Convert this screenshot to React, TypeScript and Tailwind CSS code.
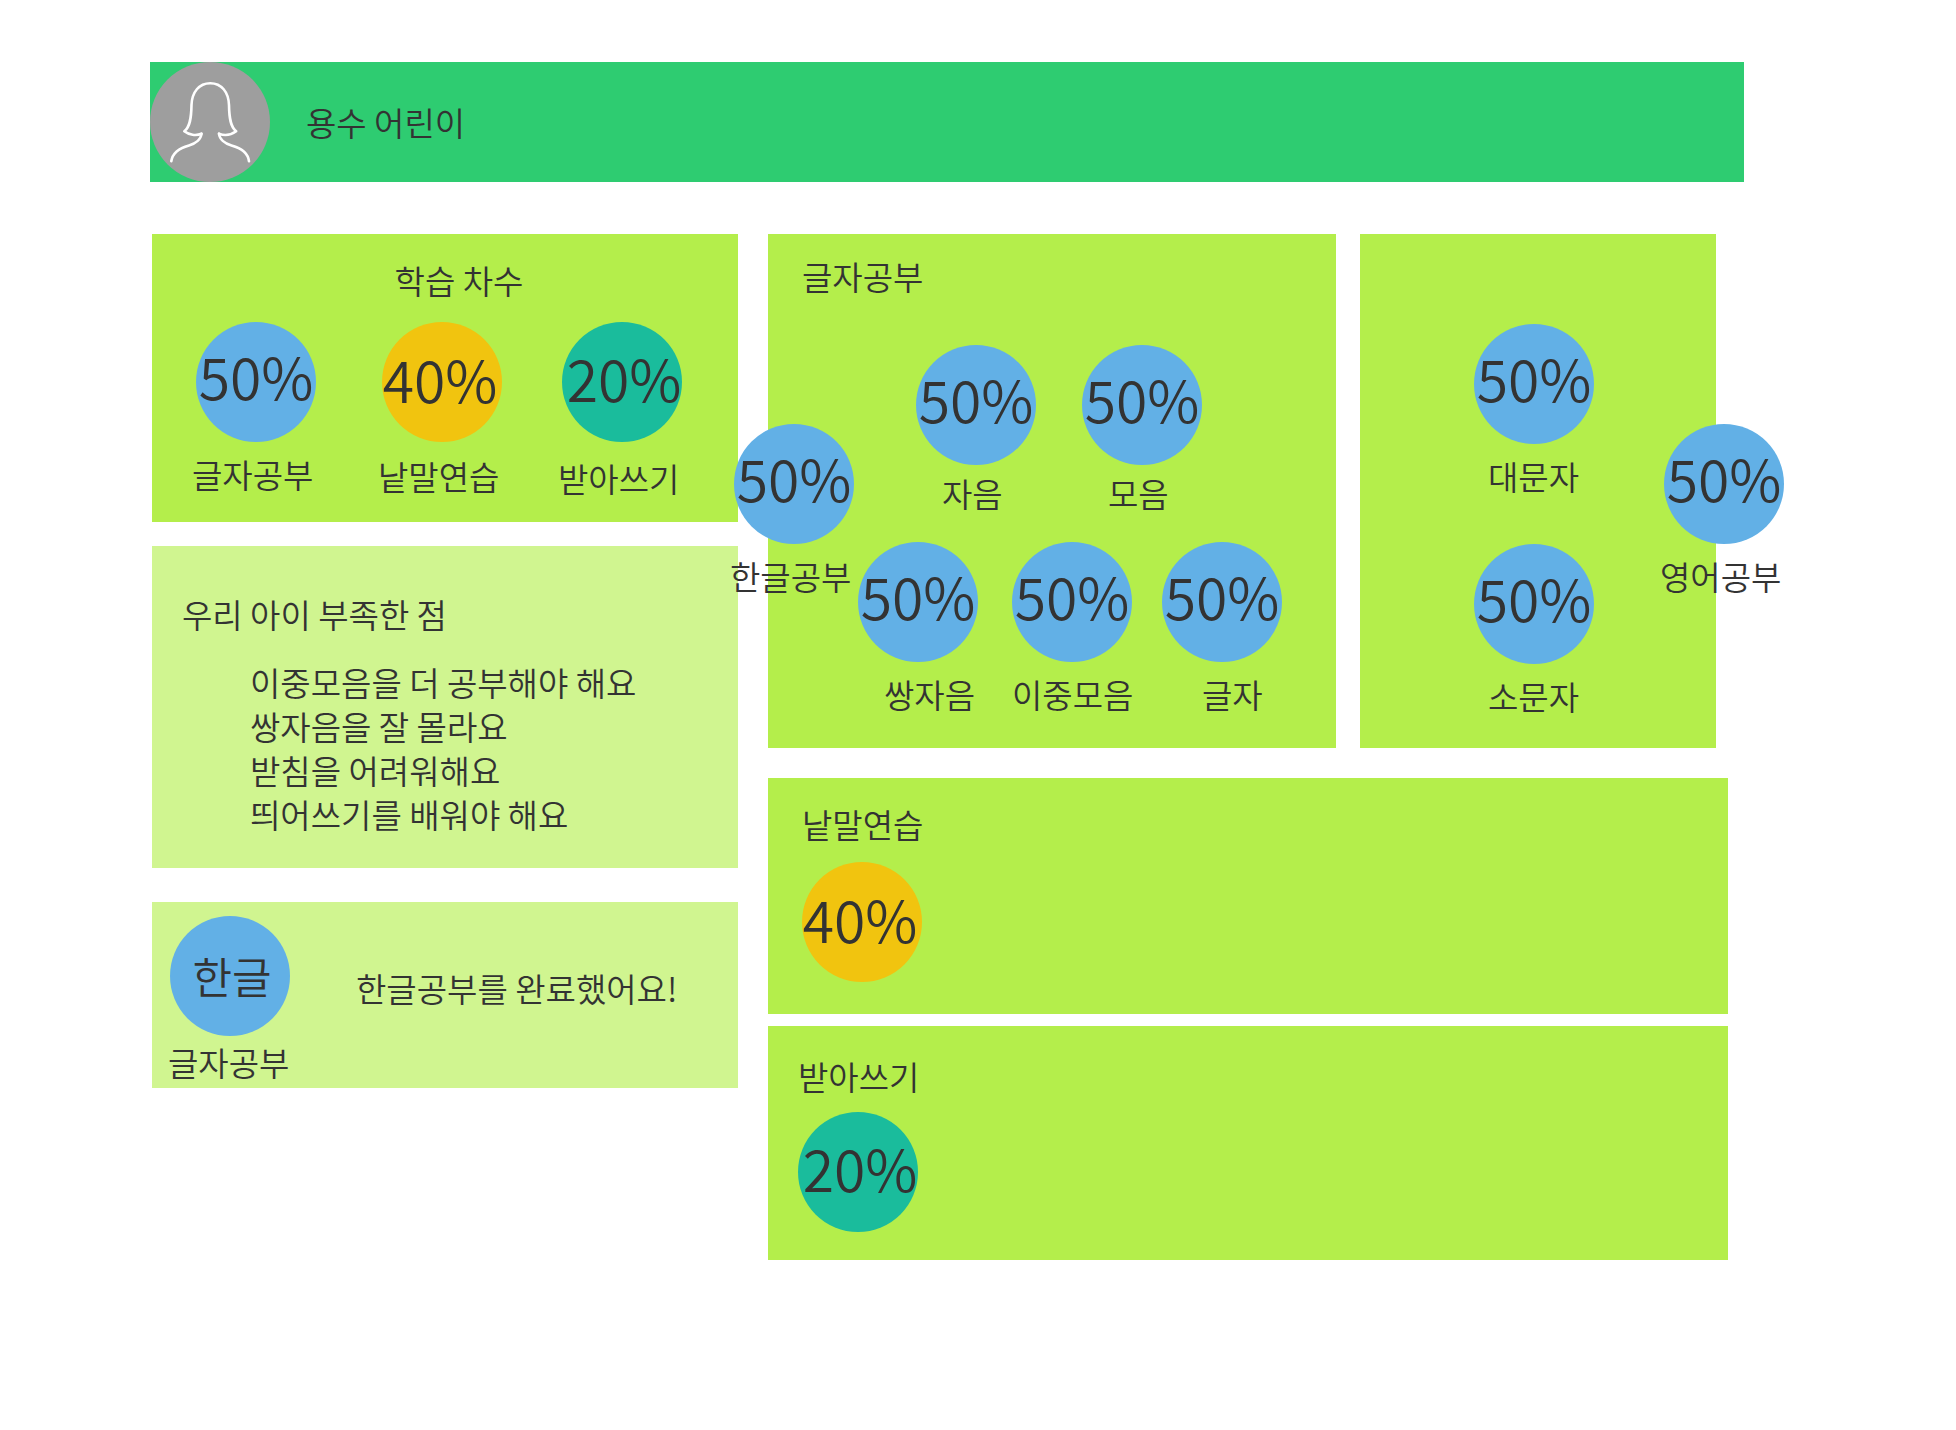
type Tone = 'blue' | 'amber' | 'teal';

// Each tone carries the resting place of its figure inside the disc.
const toneStyles: Record<Tone, string> = {
  blue: 'bg-[#62b0e6] pb-3.5',
  amber: 'bg-[#f1c40f] pr-1 pb-2',
  teal: 'bg-[#1abc9c] pl-1 pb-2.5',
};

function Disc({ tone, value }: { tone: Tone; value: string }) {
  return (
    <div
      className={`flex size-[120px] shrink-0 items-center justify-center rounded-full text-[57px] leading-none whitespace-nowrap ${toneStyles[tone]}`}
    >
      {value}
    </div>
  );
}

function Score({
  tone = 'blue',
  value = '50%',
  label,
  labelClass = '-ml-1 mt-2.5',
}: {
  tone?: Tone;
  value?: string;
  label: string;
  labelClass?: string;
}) {
  return (
    <figure className="w-[120px]">
      <Disc tone={tone} value={value} />
      <figcaption className={`whitespace-nowrap ${labelClass}`}>{label}</figcaption>
    </figure>
  );
}

function Avatar() {
  return (
    <svg viewBox="0 0 120 120" className="size-[120px] shrink-0" role="img" aria-label="프로필">
      <circle cx="60" cy="60" r="60" fill="#9e9e9e" />
      <g fill="none" stroke="#fff" strokeWidth="2.6" strokeLinecap="round" strokeLinejoin="round">
        <path d="M51.500 71.700C51 77 46 81.500 39 83.500C30 86 22.500 90.500 21.300 99.300" />
        <path d="M51.500 71.700C46 74 39 73 34.300 69.300C40 65 41.300 56 41.500 43C42 30 49 21.200 60.300 21.200C71.500 21.200 78.500 30 79 43C79.200 56 80.500 65 86.200 69.300C81 73 75 74 69 71.700" />
        <path d="M69 71.700C69.500 77 74.500 81.500 81.500 83.500C90.500 86 98 90.500 99 99.300" />
      </g>
    </svg>
  );
}

const weakPoints = [
  '이중모음을 더 공부해야 해요',
  '쌍자음을 잘 몰라요',
  '받침을 어려워해요',
  '띄어쓰기를 배워야 해요',
];

export default function App() {
  return (
    <div className="min-h-screen bg-white pt-[62px] pb-[170px] font-['Noto_Sans_CJK_KR_DemiLight','Noto_Sans_CJK_KR',sans-serif] text-[33px] leading-[44px] text-[#333333]">
      <header className="mr-[212px] ml-[150px] flex items-center gap-9 bg-[#2ecc71]">
        <Avatar />
        <h1>용수 어린이</h1>
      </header>

      <main className="mt-[52px] mr-[228px] ml-[152px] grid grid-cols-[586fr_960fr] items-start gap-[30px]">
        <div className="flex flex-col">
          <section className="bg-[#b4ee4b] pt-6 pb-[22px]">
            <h2 className="pl-7 text-center">학습 차수</h2>
            <div className="mt-5 grid grid-cols-[186fr_180fr_120fr] pr-14 pl-11">
              <Score label="글자공부" />
              <Score tone="amber" value="40%" label="낱말연습" labelClass="-ml-1 mt-3" />
              <Score tone="teal" value="20%" label="받아쓰기" labelClass="-ml-1 mt-3.5" />
            </div>
          </section>

          <section className="mt-6 bg-[#d0f590] pt-[46px] pb-8 pl-[30px]">
            <h2>우리 아이 부족한 점</h2>
            <ul className="mt-6 pl-[68px]">
              {weakPoints.map((point) => (
                <li key={point}>{point}</li>
              ))}
            </ul>
          </section>

          <section className="mt-[34px] flex items-start gap-[66px] bg-[#d0f590] pt-3.5 pb-1 pl-[18px]">
            <figure className="w-[120px]">
              <div className="flex size-[120px] items-center justify-center rounded-full bg-[#62b0e6] pb-0.5 pl-1 text-[43px]">
                한글
              </div>
              <figcaption className="-ml-0.5 mt-1 whitespace-nowrap">글자공부</figcaption>
            </figure>
            <p className="pt-[50px]">한글공부를 완료했어요!</p>
          </section>
        </div>

        <div className="flex flex-col">
          <div className="grid grid-cols-[568fr_356fr] gap-6 pr-3">
            <section className="relative bg-[#b4ee4b] pt-5 pb-8">
              <h2 className="pl-[34px]">글자공부</h2>
              <div className="mt-[47px] grid grid-cols-[166fr_120fr] pr-[134px] pl-[148px]">
                <Score label="자음" labelClass="ml-[26px] mt-1.5" />
                <Score label="모음" labelClass="ml-[26px] mt-1.5" />
              </div>
              <div className="mt-[27px] grid grid-cols-[154fr_150fr_120fr] pr-[54px] pl-[90px]">
                <Score label="쌍자음" labelClass="ml-[26px] mt-2.5" />
                <Score label="이중모음" labelClass="mt-2.5" />
                <Score label="글자" labelClass="ml-10 mt-2.5" />
              </div>
              <div className="absolute top-[190px] -left-[34px]">
                <Score label="한글공부" />
              </div>
            </section>

            <section className="relative flex flex-col gap-[46px] bg-[#b4ee4b] pt-[90px] pl-[114px]">
              <Score label="대문자" labelClass="ml-3.5 mt-2.5" />
              <Score label="소문자" labelClass="ml-3.5 mt-2.5" />
              <div className="absolute top-[190px] -right-[68px]">
                <Score label="영어공부" />
              </div>
            </section>
          </div>

          <section className="mt-[30px] bg-[#b4ee4b] pt-6 pb-8 pl-[34px]">
            <h2 className="mb-4">낱말연습</h2>
            <Disc tone="amber" value="40%" />
          </section>

          <section className="mt-3 bg-[#b4ee4b] pt-7 pb-7 pl-[30px]">
            <h2 className="mb-3.5">받아쓰기</h2>
            <Disc tone="teal" value="20%" />
          </section>
        </div>
      </main>
    </div>
  );
}
